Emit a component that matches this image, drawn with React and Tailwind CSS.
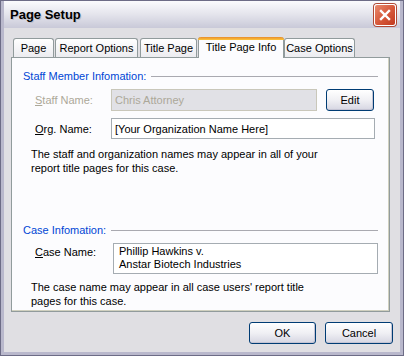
import React from 'react';

const FONT = { fontFamily: '"Liberation Sans", Arial, sans-serif' };

// ---------------------------------------------------------
// Tab
// ---------------------------------------------------------
const Tab = ({ label, width, selected, className = '' }) =>
  selected ? (
    <div
      className={`relative -mb-px h-[21px] flex items-start justify-center pt-[3px] bg-[#fcfcfe] border-x border-[#919b9c] rounded-t-[3px] text-black ${className}`}
      style={{ width }}
    >
      <div className="absolute left-[-1px] right-[-1px] top-0 h-[3px] rounded-t-[3px] bg-gradient-to-b from-[#e68b2c] to-[#ffc73c]" />
      {label}
    </div>
  ) : (
    <div
      className={`h-[19px] flex items-center justify-center bg-gradient-to-b from-white to-[#ececf0] border border-b-0 border-[#919b9c] rounded-t-[3px] text-black ${className}`}
      style={{ width }}
    >
      {label}
    </div>
  );

// ---------------------------------------------------------
// Group heading with rule
// ---------------------------------------------------------
const GroupHeading = ({ label, className = '' }) => (
  <div className={`flex items-center h-[14px] pl-[11px] pr-[11px] ${className}`}>
    <span className="text-[#0046d5] whitespace-nowrap">{label}</span>
    <div className="flex-1 h-px bg-[#a9a9b0] ml-[5px]" />
  </div>
);

// ---------------------------------------------------------
// XP button
// ---------------------------------------------------------
const XpButton = ({ label, width }) => (
  <div
    className="h-[22px] flex items-center justify-center rounded-[3px] border border-[#003c74] bg-gradient-to-b from-white via-[#f0f0f4] to-[#d6d6e2] text-black shadow-[inset_-1px_-1px_0_#c4c4d4]"
    style={{ width }}
  >
    {label}
  </div>
);

export default function App() {
  return (
    <div
      className="w-[404px] h-[356px] flex flex-col bg-[#e0dfe3] border border-[#6d6c86] text-[11px] leading-[14px] text-black overflow-hidden"
      style={FONT}
    >
      {/* Title bar */}
      <div className="h-[27px] shrink-0 flex items-center justify-between pl-[6px] pr-[4px] bg-gradient-to-b from-[#fbfbfd] via-[#e4e4ec] to-[#c9c9d8] border-x-[3px] border-[#b9b8cc]">
        <span className="text-[13px] font-bold text-black [text-shadow:1px_1px_0_#c0c0cc]">Page Setup</span>
        <div className="w-[22px] h-[22px] rounded-[3px] border border-white bg-gradient-to-br from-[#e88a6e] via-[#d75a3c] to-[#c2391e] flex items-center justify-center shadow-[0_0_0_1px_#b04a36]">
          <svg width="12" height="12" viewBox="0 0 12 12">
            <path d="M2 2 L10 10 M10 2 L2 10" stroke="white" strokeWidth="2.4" strokeLinecap="square" />
          </svg>
        </div>
      </div>

      {/* Body */}
      <div className="flex-1 flex flex-col border-x-[3px] border-b-[3px] border-[#b9b8cc] px-[7px] pt-[9px]">
        {/* Tabs */}
        <div className="flex items-end h-[20px] pl-[2px] relative z-10">
          <Tab label="Page" width={41} />
          <Tab label="Report Options" width={83} className="ml-[1px]" />
          <Tab label="Title Page" width={57} className="ml-[2px]" />
          <Tab label="Title Page Info" width={86} selected className="ml-[1px]" />
          <Tab label="Case Options" width={71} />
        </div>

        {/* Panel */}
        <div className="w-[379px] h-[255px] flex flex-col bg-[#fcfcfe] border border-[#919b9c] shadow-[inset_-1px_-1px_0_#d0d0bf]">
          <GroupHeading label="Staff Member Infomation:" className="mt-[11px]" />

          <div className="flex items-center mt-[6px] pl-[23px] h-[22px]">
            <span className="w-[76px] text-[#aca899]"><span className="underline">S</span>taff Name:</span>
            <div className="w-[206px] h-[22px] flex items-center pl-[3px] bg-[#e1e1e6] border border-[#c9c7ba] text-[#aca899]">
              Chris Attorney
            </div>
            <div className="ml-[9px]">
              <XpButton label="Edit" width={48} />
            </div>
          </div>

          <div className="flex items-center mt-[7px] pl-[23px] h-[21px]">
            <span className="w-[76px]"><span className="underline">O</span>rg. Name:</span>
            <div className="w-[264px] h-[21px] flex items-center pl-[3px] bg-white border border-[#a5acb2]">
              [Your Organization Name Here]
            </div>
          </div>

          <p className="mt-[8px] pl-[19px]">
            The staff and organization names may appear in all of your
            <br />
            report title pages for this case.
          </p>

          <GroupHeading label="Case Infomation:" className="mt-[48px]" />

          <div className="flex items-start mt-[6px] pl-[23px]">
            <span className="w-[78px] mt-[2px]"><span className="underline">C</span>ase Name:</span>
            <div className="w-[265px] h-[31px] pl-[5px] pt-[1px] bg-white border border-[#a5acb2] leading-[13px]">
              Phillip Hawkins v.
              <br />
              Anstar Biotech Industries
            </div>
          </div>

          <p className="mt-[6px] pl-[19px]">
            The case name may appear in all case users' report title
            <br />
            pages for this case.
          </p>
        </div>

        {/* Dialog buttons */}
        <div className="flex justify-end gap-[9px] mt-[10px]">
          <XpButton label="OK" width={67} />
          <XpButton label="Cancel" width={68} />
        </div>
      </div>
    </div>
  );
}
